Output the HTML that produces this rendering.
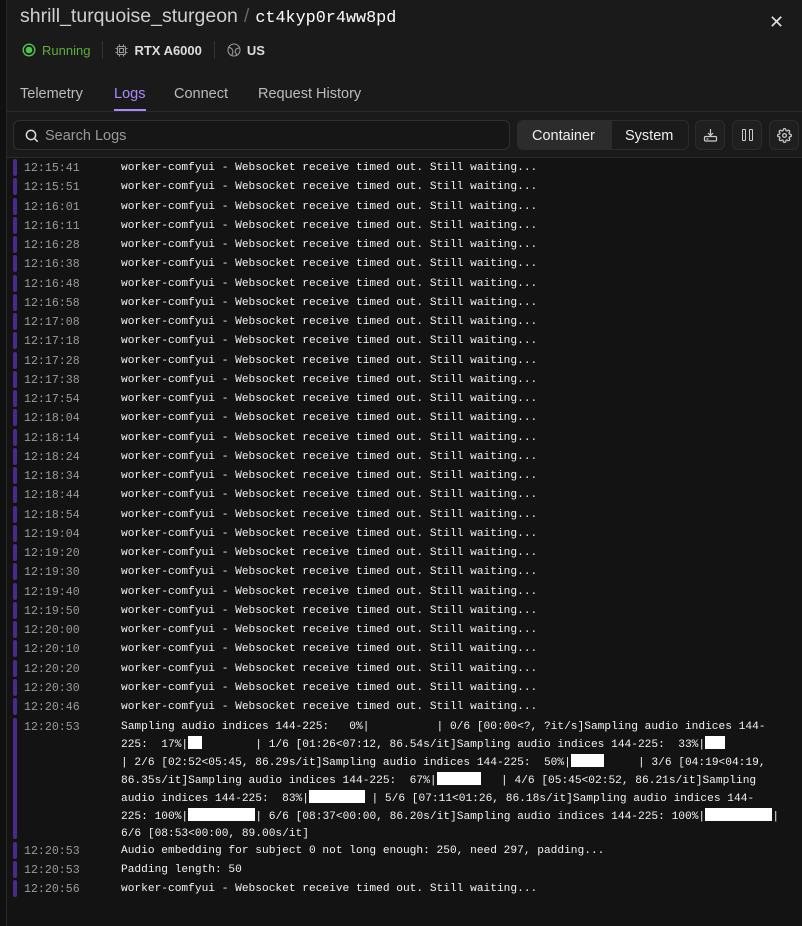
<!DOCTYPE html>
<html><head><meta charset="utf-8"><style>
*{margin:0;padding:0;box-sizing:border-box}
body{width:802px;height:926px;background:#1a1a1a;font-family:"Liberation Sans",sans-serif;color:#e5e5e5;position:relative;overflow:hidden}
.strip{position:absolute;left:0;top:0;width:7px;height:926px;background:#101010;border-right:1px solid #2a2a2a}
.title{position:absolute;left:20px;top:5px;font-size:19.5px;color:#cfcfcf;white-space:nowrap}
.title .sl{color:#666;margin:0 6px}
.title .id{font-family:"Liberation Mono",monospace;color:#fff;font-size:16.8px}
.close{position:absolute;left:769px;top:12px;font-size:18px;color:#ddd}
.stat{position:absolute;top:41px;left:22px;font-size:13px;display:flex;align-items:center;white-space:nowrap;color:#ddd}
.sep{width:1px;height:18px;background:#333;margin:0 12px}
.tabs{position:absolute;top:86px;left:20px;font-size:14.5px;color:#bbb}
.tabs span{position:absolute;white-space:nowrap}
.hr{position:absolute;left:7px;right:0;height:1px;background:#2a2a2a}
.search{position:absolute;left:13px;top:120px;width:497px;height:30px;border:1px solid #303030;border-radius:6px;background:#161616;color:#9a9a9a;font-size:14.5px;padding:7px 0 0 31px}
.seg{position:absolute;left:517px;top:120px;width:172px;height:30px;border:1px solid #2c2c2c;border-radius:6px;background:#1b1b1b;font-size:14.5px;overflow:hidden}
.seg span{position:absolute;top:7px}
.btn{position:absolute;top:120px;width:30px;height:30px;border:1px solid #2c2c2c;border-radius:6px;background:#1f1f1f}
.logs{position:absolute;left:7px;top:158px;right:0;bottom:0;background:#131313;font-family:"Liberation Mono",monospace;font-size:11.2px;color:#f2f2f2}
.row{position:absolute;left:0;right:0}
.bar{position:absolute;left:6px;width:4px;background:#4a2a8c;border-radius:2px}
.ts{position:absolute;left:17px;color:#9a9a9a;font-size:11.6px}
.msg{position:absolute;left:114px;white-space:pre;line-height:17px}
.b{display:inline-block;background:#fff;height:13px;vertical-align:-2px}
</style></head><body>
<div class="strip"></div>
<div class="title">shrill_turquoise_sturgeon<span class="sl">/</span><span class="id">ct4kyp0r4ww8pd</span></div>
<div class="close">✕</div>
<div class="stat">
<svg width="14" height="14" viewBox="0 0 14 14"><circle cx="7" cy="7" r="5.8" fill="none" stroke="#4ec34e" stroke-width="1.4"/><circle cx="7" cy="7" r="3.3" fill="#4ec34e"/></svg>
<span style="color:#5fae3a;margin-left:6px">Running</span><div class="sep"></div>
<svg width="13" height="13" viewBox="0 0 13 13" fill="none" stroke="#999" stroke-width="1.1"><rect x="2.5" y="2.5" width="8" height="8" rx="1"/><rect x="4.5" y="4.5" width="4" height="4"/><path d="M4.5 0.5v2M8.5 0.5v2M4.5 10.5v2M8.5 10.5v2M0.5 4.5h2M0.5 8.5h2M10.5 4.5h2M10.5 8.5h2"/></svg>
<span style="margin-left:6px;font-weight:bold;color:#ddd">RTX A6000</span><div class="sep"></div>
<svg width="14" height="14" viewBox="0 0 14 14" fill="none" stroke="#999" stroke-width="1.1"><circle cx="7" cy="7" r="6"/><path d="M2 4l3 2 1 3-1 3M12 5l-3 1-1 3 2 3"/></svg>
<span style="margin-left:6px;font-weight:bold">US</span>
</div>
<div class="tabs"><span style="left:0">Telemetry</span><span style="left:94px;color:#a78bfa">Logs</span><span style="left:154px">Connect</span><span style="left:238px">Request History</span></div>
<div style="position:absolute;left:114px;top:109px;width:32px;height:2px;background:#a78bfa"></div>
<div class="hr" style="top:111px"></div>
<div class="search"><svg style="position:absolute;left:11px;top:8px" width="14" height="14" viewBox="0 0 14 14" fill="none" stroke="#ddd" stroke-width="1.5"><circle cx="6" cy="6" r="4.6"/><path d="M9.5 9.5l3.2 3.2"/></svg>Search Logs</div>
<div class="seg"><div style="position:absolute;left:0;top:0;width:94px;height:30px;background:#2c2c2c"></div><span style="left:14px;color:#eee">Container</span><span style="left:107px;color:#eee">System</span></div>
<div class="btn" style="left:695px"><svg style="position:absolute;left:7px;top:7px" width="15" height="15" viewBox="0 0 15 15" fill="none" stroke="#ccc" stroke-width="1.2"><path d="M7.5 1v6M5 5l2.5 2.5L10 5"/><rect x="1.5" y="8.5" width="12" height="4.5" rx="1"/><path d="M3.5 11h2"/></svg></div>
<div class="btn" style="left:732px"><div style="position:absolute;left:9px;top:8px;width:4px;height:12px;border:1.2px solid #ccc;border-radius:1px"></div><div style="position:absolute;left:16px;top:8px;width:4px;height:12px;border:1.2px solid #ccc;border-radius:1px"></div></div>
<div class="btn" style="left:769px"><svg style="position:absolute;left:7px;top:7px" width="15" height="15" viewBox="0 0 24 24" fill="none" stroke="#ccc" stroke-width="2"><circle cx="12" cy="12" r="3"/><path d="M19.4 15a1.65 1.65 0 0 0 .33 1.82l.06.06a2 2 0 1 1-2.83 2.83l-.06-.06a1.65 1.65 0 0 0-1.82-.33 1.65 1.65 0 0 0-1 1.51V21a2 2 0 1 1-4 0v-.09A1.65 1.65 0 0 0 9 19.4a1.65 1.65 0 0 0-1.82.33l-.06.06a2 2 0 1 1-2.83-2.83l.06-.06A1.65 1.65 0 0 0 4.68 15a1.65 1.65 0 0 0-1.51-1H3a2 2 0 1 1 0-4h.09A1.65 1.65 0 0 0 4.6 9a1.65 1.65 0 0 0-.33-1.82l-.06-.06a2 2 0 1 1 2.83-2.83l.06.06A1.65 1.65 0 0 0 9 4.68a1.65 1.65 0 0 0 1-1.51V3a2 2 0 1 1 4 0v.09a1.65 1.65 0 0 0 1 1.51 1.65 1.65 0 0 0 1.82-.33l.06-.06a2 2 0 1 1 2.83 2.83l-.06.06A1.65 1.65 0 0 0 19.4 9a1.65 1.65 0 0 0 1.51 1H21a2 2 0 1 1 0 4h-.09a1.65 1.65 0 0 0-1.51 1z"/></svg></div>
<div class="hr" style="top:157px"></div>
<div class="logs" id="L"></div>
<script>
var ts=["12:15:41","12:15:51","12:16:01","12:16:11","12:16:28","12:16:38","12:16:48","12:16:58","12:17:08","12:17:18","12:17:28","12:17:38","12:17:54","12:18:04","12:18:14","12:18:24","12:18:34","12:18:44","12:18:54","12:19:04","12:19:20","12:19:30","12:19:40","12:19:50","12:20:00","12:20:10","12:20:20","12:20:30","12:20:46"];
var h="",W="worker-comfyui - Websocket receive timed out. Still waiting...";
function row(y,hh,t,m){return '<div class="row" style="top:'+y+'px"><div class="bar" style="top:1px;height:'+hh+'px"></div><div class="ts" style="top:1px;line-height:19px">'+t+'</div><div class="msg" style="top:2px">'+m+'</div></div>';}
for(var i=0;i<ts.length;i++)h+=row(i*19.25,17,ts[i],W);
function b(n){return '<span class="b" style="width:'+(n*6.72)+'px"></span>';}
var y0=29*19.25;
var big="Sampling audio indices 144-225:   0%|          | 0/6 [00:00&lt;?, ?it/s]Sampling audio indices 144-\n225:  17%|"+b(2)+"        | 1/6 [01:26&lt;07:12, 86.54s/it]Sampling audio indices 144-225:  33%|"+b(3)+"\n| 2/6 [02:52&lt;05:45, 86.29s/it]Sampling audio indices 144-225:  50%|"+b(5)+"     | 3/6 [04:19&lt;04:19,\n86.35s/it]Sampling audio indices 144-225:  67%|"+b(6.6)+"   | 4/6 [05:45&lt;02:52, 86.21s/it]Sampling\naudio indices 144-225:  83%|"+b(8.3)+" | 5/6 [07:11&lt;01:26, 86.18s/it]Sampling audio indices 144-\n225: 100%|"+b(10)+"| 6/6 [08:37&lt;00:00, 86.20s/it]Sampling audio indices 144-225: 100%|"+b(10)+"|\n6/6 [08:53&lt;00:00, 89.00s/it]";
h+=row(y0+1,121,"12:20:53",big);
var y1=y0+124.5;
h+=row(y1,17,"12:20:53","Audio embedding for subject 0 not long enough: 250, need 297, padding...");
h+=row(y1+19.25,17,"12:20:53","Padding length: 50");
h+=row(y1+38.5,17,"12:20:56",W);
document.getElementById("L").innerHTML=h;
</script>
</body></html>
